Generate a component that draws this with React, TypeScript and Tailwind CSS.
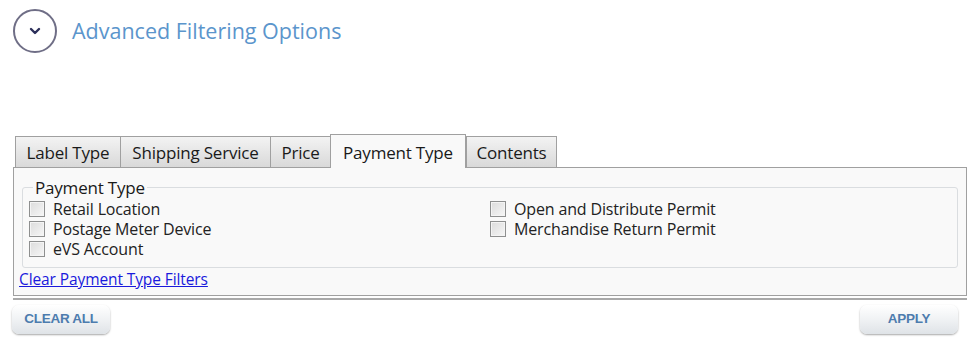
import React from "react";

const font = { fontFamily: '"Open Sans", "Noto Sans", sans-serif' };

function Tab({ label, active, w }: { label: string; active?: boolean; w: string }) {
  if (active) {
    return (
      <div className={`relative z-10 -mb-px flex h-[34px] items-center justify-center border border-b-0 border-[#a0a0a0] bg-[#f9f9f9] pt-[2px] text-[17px] tracking-[-0.2px] text-[#1a1a1a] ${w}`}>
        {label}
      </div>
    );
  }
  return (
    <div className={`-mr-px flex h-[31px] items-center justify-center border border-b-0 border-[#a0a0a0] bg-gradient-to-b from-[#f3f3f3] to-[#d9d9d9] pt-[2px] text-[17px] tracking-[-0.2px] text-[#1a1a1a] ${w}`}>
      {label}
    </div>
  );
}

function Check({ label }: { label: string }) {
  return (
    <label className="flex h-[20px] items-center gap-[8px] text-[16px] leading-[18px] tracking-[-0.15px] text-[#222]">
      <span className="block h-[16px] w-[16px] shrink-0 border border-[#8e8f8f] bg-gradient-to-br from-[#dcdcdc] to-[#f6f6f6] shadow-[inset_0_0_0_1px_#f4f4f4]" />
      {label}
    </label>
  );
}

function Btn({ label }: { label: string }) {
  return (
    <button className="flex h-[29px] w-[98px] items-center justify-center rounded-[7px] bg-gradient-to-b from-[#ffffff] via-[#f0f2f4] to-[#dfe3e7] text-[13.5px] font-bold tracking-[-0.3px] text-[#4d7cae] shadow-[0_1px_2px_rgba(0,0,0,0.35)]" style={{ fontFamily: '"Liberation Sans", Arial, sans-serif' }}>
      {label}
    </button>
  );
}

export default function App() {
  return (
    <div className="h-[350px] w-[980px] bg-white" style={font}>
      <div className="flex items-center pl-[13px] pt-[9px]">
        <div className="flex h-[44px] w-[44px] items-center justify-center rounded-full border-2 border-[#6f6e86]">
          <svg width="12" height="8" viewBox="0 0 12 8">
            <path d="M2 2 L6 6 L10 2" fill="none" stroke="#2c2f5a" strokeWidth="2.4" strokeLinecap="round" strokeLinejoin="round" />
          </svg>
        </div>
        <div className="ml-[15px] text-[21.5px] leading-none text-[#5b95cc]">Advanced Filtering Options</div>
      </div>

      <div className="mt-[81px] flex items-end pl-[15px]">
        <Tab label="Label Type" w="w-[106px]" />
        <Tab label="Shipping Service" w="w-[151px]" />
        <Tab label="Price" w="w-[61px]" />
        <Tab label="Payment Type" active w="w-[136px]" />
        <Tab label="Contents" w="w-[91px]" />
      </div>
      <div className="mx-[13px] h-[129px] w-[954px] border border-[#a0a0a0] bg-[#f9f9f9]">
        <fieldset className="mx-[8px] mt-[12px] h-[88px] rounded-[3px] border border-[#dadde0] pl-[6px] pt-0">
          <legend className="ml-[4px] px-[2px] text-[17px] leading-[15px] tracking-[-0.2px] text-[#1a1a1a]">Payment Type</legend>
          <div className="flex pt-[4px]">
            <div className="flex w-[461px] flex-col">
              <Check label="Retail Location" />
              <Check label="Postage Meter Device" />
              <Check label="eVS Account" />
            </div>
            <div className="flex flex-col">
              <Check label="Open and Distribute Permit" />
              <Check label="Merchandise Return Permit" />
            </div>
          </div>
        </fieldset>
        <a href="#" className="ml-[5px] mt-[1px] block text-[15.5px] leading-[20px] tracking-[-0.1px] text-[#1a1adc] underline">
          Clear Payment Type Filters
        </a>
      </div>
      <div className="mx-[13px] mt-[2px] h-[2px] w-[954px] bg-[#a9a9a9]" />
      <div className="mt-[5px] flex w-[958px] justify-between pl-[12px]">
        <Btn label="CLEAR ALL" />
        <Btn label="APPLY" />
      </div>
    </div>
  );
}
